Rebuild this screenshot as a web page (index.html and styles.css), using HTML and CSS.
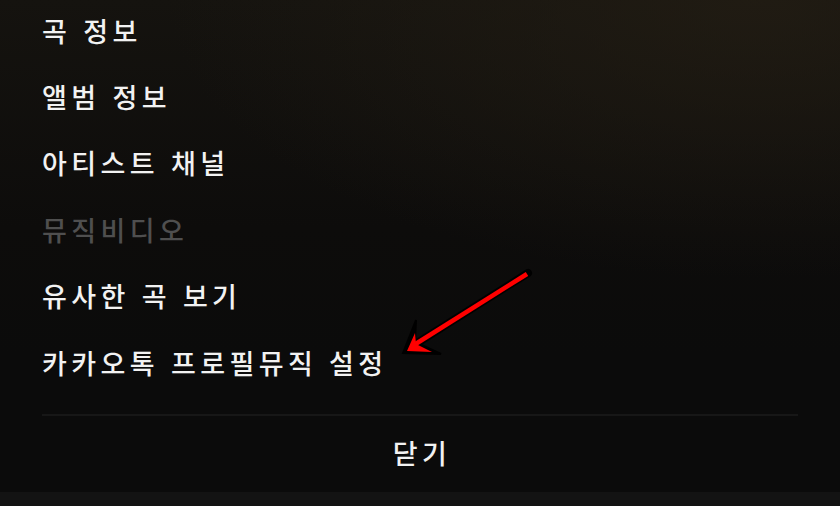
FILE: index.html
```html
<!DOCTYPE html>
<html lang="ko">
<head>
    <meta charset="UTF-8">
    <meta name="viewport" content="width=device-width, initial-scale=1.0">
    <title>더보기</title>
    <link rel="stylesheet" href="styles.css">
</head>
<body>
    <div class="sheet">
        <ul class="menu">
            <li class="menu-item">곡 정보</li>
            <li class="menu-item">앨범 정보</li>
            <li class="menu-item">아티스트 채널</li>
            <li class="menu-item disabled">뮤직비디오</li>
            <li class="menu-item">유사한 곡 보기</li>
            <li class="menu-item">카카오톡 프로필뮤직 설정</li>
        </ul>
        <div class="sheet-footer">
            <button type="button" class="close-btn">닫기</button>
        </div>
        <div class="bottom-bar"></div>

        <!-- annotation arrow -->
        <svg class="arrow" width="140" height="100" viewBox="0 0 140 100">
            <line x1="14" y1="80" x2="128" y2="8" stroke="#000" stroke-width="8" stroke-linecap="round"/>
            <polygon points="3,88 16,55 15,77 41,89" fill="#000" stroke="#000" stroke-width="2" stroke-linejoin="miter"/>
            <line x1="14" y1="80" x2="127" y2="9" stroke="#f00" stroke-width="4.5" stroke-linecap="butt"/>
            <polygon points="7,86 15,68 16,79 32,87" fill="#f00"/>
        </svg>
    </div>
</body>
</html>
```

FILE: styles.css
```css
/* Global styles */
html, body {
    margin: 0;
    padding: 0;
    height: 100%;
}

body {
    font-family: "Noto Sans CJK KR", "Noto Sans", sans-serif;
    background-color: #0c0c0c;
    overflow: hidden;
}

/* Bottom sheet */
.sheet {
    position: relative;
    height: 506px;
    display: flex;
    flex-direction: column;
    background:
        radial-gradient(ellipse 70% 55% at 90% 0%, rgba(36, 30, 20, 0.75), rgba(36, 30, 20, 0) 100%),
        linear-gradient(to bottom, #15130f 0%, #0d0c0b 45%, #0b0b0b 70%, #0b0b0b 100%);
}

.menu {
    list-style: none;
    margin: -3px 42px 0;
    padding: 0 0 19px;
    border-bottom: 2px solid #171717;
}

.menu-item {
    height: 66.4px;
    display: flex;
    align-items: center;
    color: #f2f2f2;
    font-size: 27px;
    font-weight: 500;
    letter-spacing: 4.4px;
}

.menu-item.disabled {
    color: #4f4f4f;
}

/* Footer */
.sheet-footer {
    flex: 1;
    display: flex;
    align-items: center;
    justify-content: center;
    padding-left: 4px;
    padding-bottom: 3px;
}

.close-btn {
    background: none;
    border: none;
    padding: 0;
    color: #f2f2f2;
    font-family: inherit;
    font-size: 27px;
    font-weight: 500;
    letter-spacing: 4.4px;
    cursor: pointer;
}

.bottom-bar {
    height: 14px;
    background-color: #131313;
}

/* Annotation */
.arrow {
    position: absolute;
    left: 400px;
    top: 265px;
}
```
